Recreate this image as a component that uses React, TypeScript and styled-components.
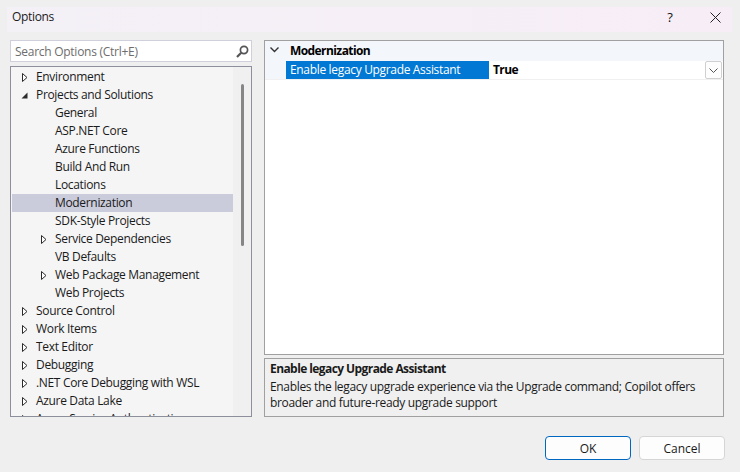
import React from "react";
import styled, { createGlobalStyle } from "styled-components";

const Global = createGlobalStyle`
  html, body { margin: 0; padding: 0; background: #efefef; }
  * { box-sizing: border-box; }
`;

const Dialog = styled.div`
  width: 740px;
  height: 472px;
  overflow: hidden;
  background: #efefef;
  padding-top: 7px;
  font-family: "Open Sans", "Noto Sans", sans-serif;
  font-size: 12px;
  letter-spacing: -0.33px;
  color: #1a1a1a;
`;

const TitleBar = styled.div`
  height: 25px;
  margin: 0 8px 0 7px;
  padding: 0 0 5px 5px;
  display: flex;
  align-items: center;
  gap: 21px;
  background: linear-gradient(90deg, #f3f0f6 0%, #f6eff7 50%, #f7edf6 100%);
`;

const Title = styled.span`
  flex: 1;
  line-height: 20px;
`;

const TitleButton = styled.button<{ $w: number }>`
  width: ${(p) => p.$w}px;
  height: 20px;
  padding: 0;
  border: 0;
  background: none;
  display: flex;
  align-items: center;
  justify-content: center;
  font: inherit;
  font-size: 13px;
  color: #111;
`;

const Body = styled.div`
  display: grid;
  grid-template-columns: 242px 460px;
  column-gap: 12px;
  padding: 8px 0 0 10px;
`;

const LeftColumn = styled.div`
  display: flex;
  flex-direction: column;
  gap: 4px;
  height: 377px;
`;

const SearchBox = styled.div`
  height: 22px;
  background: #fff;
  border: 1px solid #cfd0dc;
  padding: 0 2px 0 4px;
  display: flex;
  align-items: center;
`;

const SearchText = styled.span`
  flex: 1;
  letter-spacing: -0.27px;
  color: #6d6d6d;
`;

const TreePanel = styled.div`
  flex: 1;
  display: flex;
  min-height: 0;
  border: 1px solid #8e8f9c;
  background: #f5f5f5;
  padding-left: 1px;
`;

const TreeList = styled.ul`
  list-style: none;
  margin: 0;
  padding: 1px 0 0;
  width: 221px;
  overflow: hidden;
`;

const TreeRow = styled.li<{ $level: number; $selected?: boolean }>`
  height: 18px;
  display: flex;
  align-items: center;
  line-height: 18px;
  white-space: nowrap;
  padding-left: ${(p) => (p.$level === 0 ? 7 : 26)}px;
  background: ${(p) => (p.$selected ? "#cbccdb" : "transparent")};
`;

const ArrowSlot = styled.span`
  width: 17px;
  height: 18px;
  padding-left: 3px;
  flex: none;
  display: flex;
  align-items: center;
`;

const ExpandedIcon = styled.svg`
  margin-left: -1px;
`;

const Track = styled.div`
  width: 18px;
  background: #f0f0f0;
  padding: 17px 0 0 8px;
`;

const Thumb = styled.div`
  width: 3px;
  height: 162px;
  border-radius: 2px;
  background: #868686;
`;

const RightColumn = styled.div`
  display: flex;
  flex-direction: column;
  gap: 3px;
  height: 377px;
`;

const GridPanel = styled.div`
  height: 315px;
  background: #fff;
  border: 1px solid #a0a0a0;
`;

const CategoryRow = styled.div`
  height: 20px;
  padding-bottom: 2px;
  background: #f3f6fb;
  display: flex;
  align-items: center;
  font-weight: 700;
  letter-spacing: -0.58px;
  color: #000;
`;

const Chevron = styled.span`
  width: 25px;
  display: flex;
  padding-left: 5px;
  flex: none;
`;

const PropertyRow = styled.div`
  height: 19px;
  display: flex;
  border-bottom: 1px solid #f0f0f0;
`;

const Gutter = styled.div`
  width: 21px;
  background: #f3f6fb;
`;

const PropertyLabel = styled.div`
  width: 203px;
  height: 18px;
  padding-left: 4px;
  line-height: 18px;
  background: #0078d4;
  color: #fff;
`;

const PropertyValue = styled.div`
  flex: 1;
  padding-left: 4px;
  line-height: 18px;
  font-weight: 700;
  letter-spacing: -0.58px;
  color: #000;
`;

const DropButton = styled.div`
  width: 17px;
  height: 18px;
  margin: 0 1px 0 0;
  background: #fdfdfd;
  border: 1px solid #d0d0d0;
  border-radius: 2px;
  display: flex;
  align-items: center;
  justify-content: center;
`;

const Description = styled.div`
  height: 59px;
  border: 1px solid #a0a0a0;
  background: #f0f0f0;
  padding: 2px 5px;
  line-height: 16px;
`;

const DescTitle = styled.div`
  font-weight: 700;
  letter-spacing: -0.58px;
  line-height: 15px;
  margin-bottom: 3px;
`;

const Footer = styled.div`
  display: flex;
  gap: 8px;
  justify-content: flex-end;
  padding: 19px 15px 0 0;
`;

const Button = styled.button<{ $primary?: boolean }>`
  width: 86px;
  height: 24px;
  padding: 0;
  font: inherit;
  color: #1a1a1a;
  background: #fdfdfd;
  border: 1px solid ${(p) => (p.$primary ? "#0067c0" : "#d5d5d5")};
  border-radius: 4px;
`;

const Collapsed = () => (
  <svg width="6" height="9" viewBox="0 0 6 9">
    <path d="M0.5 0.5 L5 4.5 L0.5 8.5 Z" fill="#fff" stroke="#2b2b2b" strokeWidth="1" />
  </svg>
);

const Expanded = () => (
  <ExpandedIcon width="7" height="7" viewBox="0 0 7 7">
    <path d="M6.5 0.5 L6.5 6.5 L0.5 6.5 Z" fill="#2b2b2b" />
  </ExpandedIcon>
);

type Item = { label: string; level: number; arrow?: "open" | "closed"; selected?: boolean };

const items: Item[] = [
  { label: "Environment", level: 0, arrow: "closed" },
  { label: "Projects and Solutions", level: 0, arrow: "open" },
  { label: "General", level: 1 },
  { label: "ASP.NET Core", level: 1 },
  { label: "Azure Functions", level: 1 },
  { label: "Build And Run", level: 1 },
  { label: "Locations", level: 1 },
  { label: "Modernization", level: 1, selected: true },
  { label: "SDK-Style Projects", level: 1 },
  { label: "Service Dependencies", level: 1, arrow: "closed" },
  { label: "VB Defaults", level: 1 },
  { label: "Web Package Management", level: 1, arrow: "closed" },
  { label: "Web Projects", level: 1 },
  { label: "Source Control", level: 0, arrow: "closed" },
  { label: "Work Items", level: 0, arrow: "closed" },
  { label: "Text Editor", level: 0, arrow: "closed" },
  { label: "Debugging", level: 0, arrow: "closed" },
  { label: ".NET Core Debugging with WSL", level: 0, arrow: "closed" },
  { label: "Azure Data Lake", level: 0, arrow: "closed" },
  { label: "Azure Service Authentication", level: 0, arrow: "closed" },
];

export default function App() {
  return (
    <Dialog>
      <Global />
      <TitleBar>
        <Title>Options</Title>
        <TitleButton $w={14}>?</TitleButton>
        <TitleButton $w={34}>
          <svg width="11" height="11" viewBox="0 0 11 11">
            <path d="M0.5 0.5 L10.5 10.5 M10.5 0.5 L0.5 10.5" stroke="#222" strokeWidth="1" fill="none" />
          </svg>
        </TitleButton>
      </TitleBar>
      <Body>
        <LeftColumn>
          <SearchBox>
            <SearchText>Search Options (Ctrl+E)</SearchText>
            <svg width="13" height="13" viewBox="0 0 13 13">
              <circle cx="8" cy="5" r="3.6" fill="none" stroke="#555" strokeWidth="1.7" />
              <path d="M5.2 7.8 L1 12" stroke="#555" strokeWidth="2.2" />
            </svg>
          </SearchBox>
          <TreePanel>
            <TreeList>
              {items.map((it) => (
                <TreeRow key={it.label} $level={it.level} $selected={it.selected}>
                  <ArrowSlot>
                    {it.arrow === "open" ? <Expanded /> : it.arrow === "closed" ? <Collapsed /> : null}
                  </ArrowSlot>
                  <span>{it.label}</span>
                </TreeRow>
              ))}
            </TreeList>
            <Track>
              <Thumb />
            </Track>
          </TreePanel>
        </LeftColumn>
        <RightColumn>
          <GridPanel>
            <CategoryRow>
              <Chevron>
                <svg width="9" height="6" viewBox="0 0 9 6">
                  <path d="M0.5 0.5 L4.5 4.5 L8.5 0.5" fill="none" stroke="#333" strokeWidth="1.4" />
                </svg>
              </Chevron>
              Modernization
            </CategoryRow>
            <PropertyRow>
              <Gutter />
              <PropertyLabel>Enable legacy Upgrade Assistant</PropertyLabel>
              <PropertyValue>True</PropertyValue>
              <DropButton>
                <svg width="9" height="5" viewBox="0 0 9 5">
                  <path d="M0.5 0.5 L4.5 4.5 L8.5 0.5" fill="none" stroke="#555" strokeWidth="1" />
                </svg>
              </DropButton>
            </PropertyRow>
          </GridPanel>
          <Description>
            <DescTitle>Enable legacy Upgrade Assistant</DescTitle>
            Enables the legacy upgrade experience via the Upgrade command; Copilot offers
            <br />
            broader and future-ready upgrade support
          </Description>
        </RightColumn>
      </Body>
      <Footer>
        <Button $primary>OK</Button>
        <Button>Cancel</Button>
      </Footer>
    </Dialog>
  );
}
